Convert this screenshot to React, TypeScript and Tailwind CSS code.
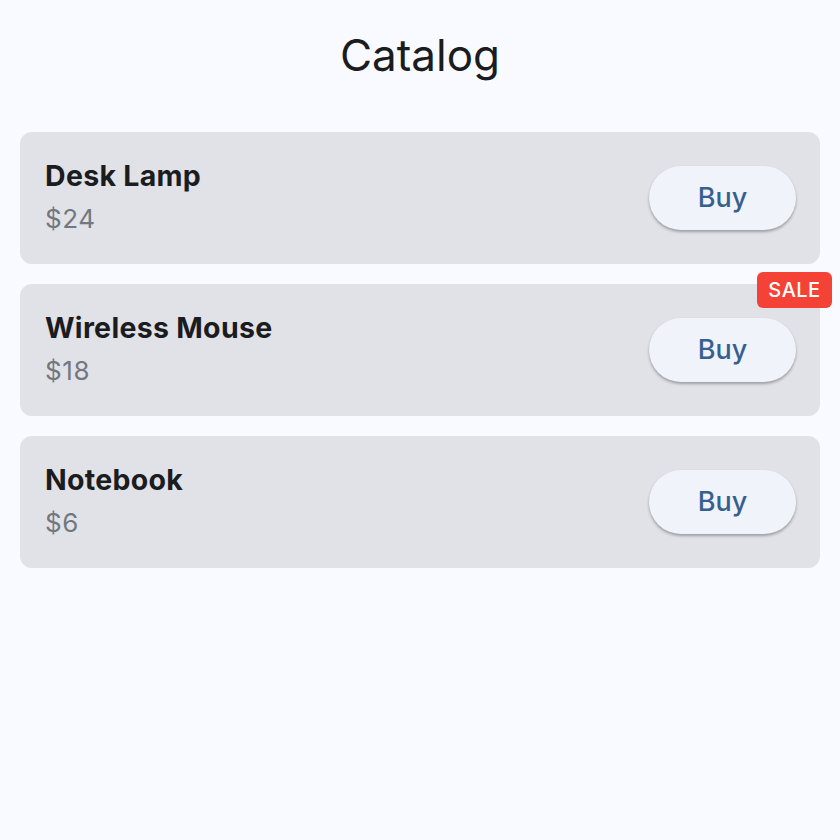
import React from "react";

const items = [
  { name: "Desk Lamp", price: "$24", sale: false },
  { name: "Wireless Mouse", price: "$18", sale: true },
  { name: "Notebook", price: "$6", sale: false },
];

export default function App() {
  return (
    <div
      className="min-h-[840px] w-[840px] bg-[#f9faff] px-5"
      style={{ fontFamily: "Inter, 'Noto Sans', sans-serif" }}
    >
      <h1 className="flex h-[110px] items-center justify-center text-[44px] font-normal text-[#1a1c20]">
        Catalog
      </h1>
      <div className="mt-[22px] flex flex-col gap-5">
        {items.map((it) => (
          <div
            key={it.name}
            className="relative flex h-[132px] items-center justify-between rounded-xl bg-[#e1e2e8] pl-[25px] pr-6"
          >
            <div className="-mt-[3px] flex flex-col">
              <div className="text-[28.5px] font-bold leading-[36px] tracking-[0.3px] text-[#1a1c20]">
                {it.name}
              </div>
              <div className="mt-[9px] text-[26px] leading-[32px] tracking-[0.6px] text-[#73777f]">
                {it.price}
              </div>
            </div>
            <button className="flex h-16 w-[147px] items-center justify-center rounded-full bg-[#f1f3fb] text-[27px] font-medium text-[#36618e] shadow-[0_2px_3px_rgba(0,0,0,0.3)]">
              Buy
            </button>
            {it.sale && (
              <div className="absolute right-[-12px] top-[-12px] flex h-9 w-[75px] items-center justify-center rounded-md bg-[#f44336] text-[20px] font-medium tracking-[0.5px] text-white">
                SALE
              </div>
            )}
          </div>
        ))}
      </div>
    </div>
  );
}
